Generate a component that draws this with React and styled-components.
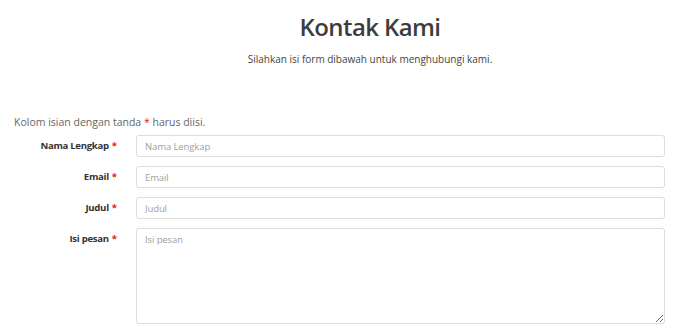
import React from "react";
import styled, { createGlobalStyle } from "styled-components";

const GlobalStyle = createGlobalStyle`
  body {
    margin: 0;
    background: #fff;
    font-family: "Open Sans", "Liberation Sans", sans-serif;
    color: #555;
  }
`;

const Page = styled.div`
  width: 700px;
  padding: 12px 0 0;
  box-sizing: border-box;
`;

const Header = styled.div`
  padding-left: 40px;
  text-align: center;
`;

const Title = styled.h1`
  margin: 0;
  font-size: 24px;
  line-height: 29px;
  font-weight: 600;
  letter-spacing: -0.6px;
  color: #3d3d3d;
`;

const Subtitle = styled.p`
  margin: 11px 0 0;
  font-size: 10px;
  line-height: 14px;
  color: #444;
`;

const Form = styled.form`
  margin-top: 49px;
  padding: 0 35px 0 14px;
`;

const Note = styled.p`
  margin: 0 0 6px;
  font-size: 10.5px;
  line-height: 14px;
  color: #666;
`;

const Row = styled.div`
  display: grid;
  grid-template-columns: 103px 1fr;
  column-gap: 19px;
  margin-bottom: 9px;
`;

const Label = styled.label`
  text-align: right;
  font-size: 9.6px;
  font-weight: 700;
  line-height: 14px;
  color: #333;
  padding-top: 4px;
`;

const LabelText = styled.span`
  letter-spacing: -0.3px;
`;

const Star = styled.span`
  color: #e21b1b;
  margin-left: ${(props) => (props.$gap ? "3px" : "0")};
`;

const fieldCss = `
  width: 100%;
  box-sizing: border-box;
  border: 1px solid #ddd;
  border-radius: 3px;
  padding: 0 8px;
  font-family: "Open Sans", "Liberation Sans", sans-serif;
  font-size: 9.5px;
  letter-spacing: -0.1px;
  color: #555;
  background: #fff;
  outline: none;
  &::placeholder {
    color: #a0a0a0;
  }
`;

const Input = styled.input`
  ${fieldCss}
  height: 22px;
`;

const TextArea = styled.textarea`
  ${fieldCss}
  height: 96px;
  padding-top: 4px;
  display: block;
  resize: vertical;
`;

const fields = [
  { label: "Nama Lengkap", name: "nama" },
  { label: "Email", name: "email" },
  { label: "Judul", name: "judul" },
];

const App = () => {
  return (
    <>
      <GlobalStyle />
      <Page>
        <Header>
          <Title>Kontak Kami</Title>
          <Subtitle>Silahkan isi form dibawah untuk menghubungi kami.</Subtitle>
        </Header>
        <Form>
          <Note>
            Kolom isian dengan tanda <Star>*</Star> harus diisi.
          </Note>
          {fields.map((f) => (
            <Row key={f.name}>
              <Label htmlFor={f.name}>
                <LabelText>{f.label}</LabelText>
                <Star $gap>*</Star>
              </Label>
              <Input id={f.name} placeholder={f.label} />
            </Row>
          ))}
          <Row>
            <Label htmlFor="pesan">
              <LabelText>Isi pesan</LabelText>
              <Star $gap>*</Star>
            </Label>
            <TextArea id="pesan" placeholder="Isi pesan" />
          </Row>
        </Form>
      </Page>
    </>
  );
};

export default App;
